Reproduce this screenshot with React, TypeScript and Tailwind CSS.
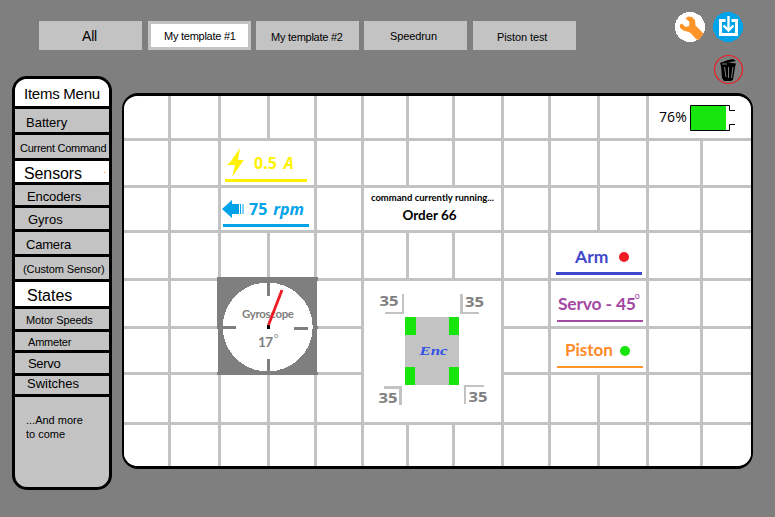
const tabs = [
  { label: "All", box: "ml-0 bg-[#c3c3c3]", text: "text-[14px] tracking-[-0.2px] pl-[43px] pt-[7px]" },
  { label: "My template #1", box: "ml-[6px] bg-white border-[3px] border-[#c3c3c3]", text: "text-[11px] tracking-[-0.25px] pl-[13px] pt-[4px]" },
  { label: "My template #2", box: "ml-[5px] bg-[#c3c3c3]", text: "text-[11px] tracking-[-0.25px] pl-[15px] pt-[8px]" },
  { label: "Speedrun", box: "ml-[5px] bg-[#c3c3c3]", text: "text-[11px] tracking-[-0.1px] pl-[26px] pt-[7px]" },
  { label: "Piston test", box: "ml-[6px] bg-[#c3c3c3]", text: "text-[11px] tracking-[-0.1px] pl-[24px] pt-[8px]" },
];

const items = [
  { label: "Items Menu", row: "h-[30px] bg-white pl-[9px] pt-[7px]", text: "text-[15px] tracking-[-0.25px]" },
  { label: "Battery", row: "h-[26px] pl-[11px] pt-[6px]", text: "text-[13px]" },
  { label: "Current Command", row: "h-[26px] pl-[5px] pt-[5px]", text: "text-[11px] tracking-[-0.28px]" },
  { label: "Sensors", row: "h-[24px] bg-white pl-[9px] pt-[5px]", text: "text-[16px] tracking-[-0.1px]" },
  { label: "Encoders", row: "h-[23px] pl-[12px] pt-[4px]", text: "text-[13px] tracking-[-0.1px]" },
  { label: "Gyros", row: "h-[24px] pl-[13px] pt-[4px]", text: "text-[13px]" },
  { label: "Camera", row: "h-[25px] pl-[11px] pt-[5px]", text: "text-[13px] tracking-[-0.2px]" },
  { label: "(Custom Sensor)", row: "h-[25px] pl-[8px] pt-[4px]", text: "text-[11px] tracking-[-0.1px]" },
  { label: "States", row: "h-[27px] bg-white pl-[12px] pt-[6px]", text: "text-[16px]" },
  { label: "Motor Speeds", row: "h-[23px] pl-[11px] pt-[3px]", text: "text-[11px] tracking-[-0.15px]" },
  { label: "Ammeter", row: "h-[21px] pl-[13px] pt-[2px]", text: "text-[11px] tracking-[-0.2px]" },
  { label: "Servo", row: "h-[23px] pl-[13px] pt-[3px]", text: "text-[13px] tracking-[-0.3px]" },
  { label: "Switches", row: "h-[21px] pl-[12px]", text: "text-[13px]" },
];

function Blank({ count }: { count: number }) {
  return (
    <>
      {Array.from({ length: count }, (_, i) => (
        <div key={i} className="bg-white" />
      ))}
    </>
  );
}

function Gyroscope() {
  return (
    <div className="col-span-2 row-span-2 -mt-[4px] -mb-[3px] -ml-[4px] -mr-[4px] bg-[#7f7f7f]">
      <svg width="101" height="98" viewBox="0 0 101 98" className="block">
        <ellipse cx="50.7" cy="50" rx="45" ry="44.5" fill="#fff" shapeRendering="crispEdges" />
        <path d="M51.5 5v14M51.5 82v14M5 50.5h14M77 51.5h14" stroke="#7f7f7f" strokeWidth="3" />
        <text x="25" y="41" fontSize="11.5" fontWeight="700" fill="#7f7f7f" textLength="52" fontFamily="Lato, sans-serif">Gyroscope</text>
        <text x="41" y="70" fontSize="13.5" fontWeight="700" fill="#7f7f7f" textLength="15" fontFamily="Lato, sans-serif">17</text>
        <text x="57" y="61" fontSize="7.5" fill="#7f7f7f" fontFamily="Lato, sans-serif">o</text>
        <rect x="50" y="48" width="3" height="4" fill="#000" />
        <path d="M51.5 48 65 13" stroke="#ed1c24" strokeWidth="2.8" />
      </svg>
    </div>
  );
}

function Drivetrain() {
  return (
    <div className="col-span-3 row-span-3 bg-white">
      <svg width="137" height="141" viewBox="364 281 137 141" className="block">
        <rect x="405" y="317" width="54" height="68" fill="#c3c3c3" />
        <g fill="#16e60d">
          <rect x="405" y="317" width="11" height="18" />
          <rect x="449" y="317" width="10" height="18" />
          <rect x="405" y="367" width="10" height="18" />
          <rect x="449" y="367" width="10" height="18" />
        </g>
        <g fill="#c3c3c3">
          <path d="M402 294h2v20h-19v-2h17ZM460 294h3v18h16v2h-19ZM384 386h18v19h-3v-16h-15ZM464 385h20v2h-18v17h-2Z" />
        </g>
        <g fill="#7f7f7f" fontFamily="Open Sans, sans-serif" fontWeight="700" fontSize="15">
          <text x="379.500" y="306" textLength="19" lengthAdjust="spacingAndGlyphs">35</text>
          <text x="465" y="307" textLength="19" lengthAdjust="spacingAndGlyphs">35</text>
          <text x="378.500" y="403" textLength="19" lengthAdjust="spacingAndGlyphs">35</text>
          <text x="468.500" y="402" textLength="19" lengthAdjust="spacingAndGlyphs">35</text>
        </g>
        <text x="419.500" y="355" fontSize="12" fontWeight="700" fontStyle="italic" fill="#3050e8" textLength="28" lengthAdjust="spacingAndGlyphs" fontFamily="Liberation Serif, serif">Enc</text>
      </svg>
    </div>
  );
}

export default function App() {
  return (
    <div className="flex h-[517px] w-[775px] overflow-hidden bg-[#7f7f7f] font-['Liberation_Sans',Arial,sans-serif] text-black">
      <aside className="ml-[12px] mt-[76px] flex h-[414px] w-[100px] shrink-0 flex-col overflow-hidden rounded-[15px] border-[3px] border-black bg-[#c3c3c3]">
        {items.map((item) => (
          <div key={item.label} className={`flex shrink-0 items-start border-b-[3px] border-black whitespace-nowrap leading-[16px] ${item.row}`}>
            <span className={`block leading-[16px] ${item.text}`}>{item.label}</span>
            {item.label === "Sensors" && <span className="ml-auto mr-[4px] mt-[6px] h-px w-px bg-[#ff9429]" />}
          </div>
        ))}
        <p className="pl-[11px] pt-[16px] text-[11px] leading-[14px]">...And more<br />to come</p>
      </aside>

      <div className="flex w-[663px] flex-col">
        <header className="flex h-[93px]">
          <nav className="-ml-[73px] mt-[21px] flex h-[29px] shrink-0">
            {tabs.map((tab) => (
              <div key={tab.label} className={`h-[29px] w-[103px] whitespace-nowrap ${tab.box}`}>
                <span className={`block leading-[16px] ${tab.text}`}>{tab.label}</span>
              </div>
            ))}
          </nav>
          <div className="ml-[99px] mt-[11px] flex flex-col">
            <div className="flex gap-[7px]">
              <svg width="31" height="31" viewBox="0 0 31 31">
                <circle cx="15" cy="16" r="15" fill="#fff" shapeRendering="crispEdges" />
                <path d="M5 13.500 7 12.500 10.500 16 14 15 14.500 11 10.500 7.500 13 5.500 17 6 20 9 20.500 14.500 28.500 22.500 24.500 28.500H21.500L15 21.500 8.500 19.500 5 17Z" fill="#ff9429" />
              </svg>
              <svg width="31" height="31" viewBox="0 0 31 31">
                <circle cx="15" cy="16" r="15" fill="#00a2e8" shapeRendering="crispEdges" />
                <path d="M12.500 9.500H7.500V23.500H23.500V9.500H18.500" fill="none" stroke="#fff" strokeWidth="3" />
                <path d="M15.500 5V19M10.500 14.500 15.500 19.500 20.500 14.500" fill="none" stroke="#fff" strokeWidth="2.400" />
              </svg>
            </div>
            <svg width="31" height="31" viewBox="0 0 31 31" className="ml-[38px] mt-[12px]">
              <circle cx="15.500" cy="15.500" r="14" fill="none" stroke="#ed1c24" strokeWidth="1.200" />
              <path d="M7 9 15 6 20 5 23 7 15 8.500 23 9.500 22 13 20 25.500 18 27H11L9 24 8 12Z" fill="#000" />
              <path d="M11.500 13 13 23M15.500 13V24M20 13 18.500 24M9 10h5" fill="none" stroke="#7f7f7f" strokeWidth="1" />
            </svg>
          </div>
        </header>

        <main className="ml-[10px] h-[376px] w-[631px] overflow-hidden rounded-[16px] border-x-2 border-y-[3px] border-black bg-[#c3c3c3]">
          <div className="grid h-[370px] w-[627px] grid-cols-[44px_47px_46px_44px_44px_42px_43px_46px_44px_46px_46px_51px_48px] grid-rows-[42px_44px_42px_45px_45px_43px_47px_41px] gap-[3px]">
            <Blank count={11} />
            <div className="col-span-2 flex bg-white pl-[10px] pt-[9px]">
              <span className="block w-[31px] pt-[3px] font-['Open_Sans',sans-serif] text-[14px] leading-[18px] tracking-[0.1px]">76%</span>
              <svg width="46" height="27" viewBox="0 0 46 27">
                <path d="M.5.500H39.500V5.500H45M.5.500V25.500H39.500V19.500H45" fill="none" stroke="#000" />
                <rect x="1" y="1" width="35" height="24" fill="#16e60d" />
              </svg>
            </div>

            <Blank count={2} />
            <div className="col-span-2 bg-white pl-[4px] pt-[8px] text-[#fff200]">
              <div className="flex h-[33px] w-[82px] items-start border-b-[3px] border-[#fff200] pl-[2px] font-['Open_Sans',sans-serif] text-[16px] font-bold leading-[18px]">
                <svg width="17" height="29" viewBox="0 0 17 29" className="-mt-[1px] shrink-0">
                  <path d="M13 0 11 12H17L5 29 8 17H0L4 13Z" fill="currentColor" />
                </svg>
                <span className="ml-[10px] mt-[5px]">0.5</span>
                <span className="ml-[7px] mt-[5px] italic">A</span>
              </div>
            </div>
            <Blank count={9} />

            <Blank count={2} />
            <div className="col-span-2 bg-white pl-[2px] pt-[7px] text-[#00a2e8]">
              <div className="flex h-[32px] w-[86px] items-center border-b-[3px] border-[#00a2e8] pb-[1px] font-['Open_Sans',sans-serif] text-[16px] font-bold leading-[18px]">
                <svg width="22" height="18" viewBox="0 0 22 18" className="-ml-[1px] shrink-0">
                  <path d="M0 9 10 0V4H17V14H10V18ZM18 4h1v10h-1ZM20.500 4h1v10h-1Z" fill="currentColor" />
                </svg>
                <span className="ml-[5px]">75</span>
                <span className="ml-[6px] italic">rpm</span>
              </div>
            </div>
            <Blank count={1} />
            <div className="col-span-3 flex flex-col items-center bg-white pt-[4px] font-['Lato',sans-serif] font-bold">
              <span className="whitespace-nowrap text-[9.500px] leading-[12px]">command currently running...</span>
              <span className="mt-[3px] pr-[6px] text-[13.5px] leading-[16px]">Order 66</span>
            </div>
            <Blank count={5} />

            <Blank count={9} />
            <div className="col-span-2 bg-white pl-[5px] pt-[14px] font-['Lato',sans-serif] text-[17.5px] font-bold text-[#3f48cc]">
              <div className="flex h-[28px] w-[86px] items-start border-b-[3px] border-[#3f48cc] pl-[19px] leading-[20px]">
                <span>Arm</span>
                <span className="ml-[11px] mt-[5px] h-[10px] w-[10px] rounded-full bg-[#ed1c24]" />
              </div>
            </div>
            <Blank count={2} />

            <Blank count={2} />
            <Gyroscope />
            <Blank count={1} />
            <Drivetrain />
            <Blank count={1} />
            <div className="col-span-2 bg-white pl-[6px] pt-[13px] font-['Lato',sans-serif] text-[17.5px] font-bold text-[#a349a4]">
              <div className="flex h-[28px] w-[86px] items-start whitespace-nowrap border-b-2 border-[#a349a4] pl-[1px] leading-[20px]">
                <span className="tracking-[-0.2px]">Servo - 45</span>
                <span className="-ml-[1px] -mt-[8px] text-[9px] font-normal">o</span>
              </div>
            </div>
            <Blank count={2} />

            <Blank count={4} />
            <div className="col-span-2 bg-white pl-[6px] pt-[11px] font-['Lato',sans-serif] text-[17px] font-bold text-[#ff8a27]">
              <div className="flex h-[28px] w-[86px] items-start border-b-2 border-[#ff9429] pl-[8px] leading-[20px]">
                <span>Piston</span>
                <span className="ml-[7px] mt-[6px] h-[10px] w-[10px] rounded-full bg-[#16e60d]" />
              </div>
            </div>
            <Blank count={2} />

            <Blank count={10} />
            <Blank count={13} />
          </div>
        </main>
      </div>
    </div>
  );
}
